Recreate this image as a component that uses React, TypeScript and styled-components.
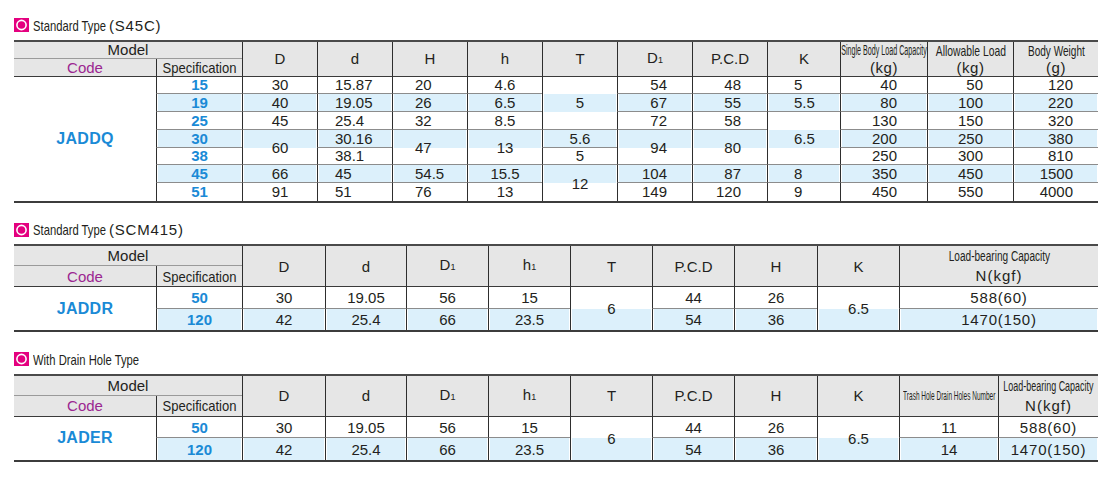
import React from 'react';
import styled, { createGlobalStyle } from 'styled-components';

const GlobalStyle = createGlobalStyle`
  html, body {
    margin: 0;
    padding: 0;
    background: #fff;
  }
  body {
    font-family: 'Liberation Sans', Arial, sans-serif;
    color: #231f20;
  }
`;

const Page = styled.div`
  width: 1084px;
  padding: 15px 12px 0 14px;
  display: flex;
  flex-direction: column;
  gap: 17px;
`;

const Section = styled.section`
  display: flex;
  flex-direction: column;
`;

const Title = styled.div`
  display: flex;
  align-items: center;
  height: 20px;
  margin-bottom: 4.5px;
  font-size: 15px;
  white-space: nowrap;
`;

const Marker = styled.svg`
  flex: none;
  margin-right: 4px;
`;

const TitleText = styled.span<{ $w: number }>`
  display: inline-block;
  width: ${(p) => p.$w}px;
  transform: scaleX(0.75);
  transform-origin: left center;
`;

const TitleGrade = styled.span`
  margin-left: 2px;
  letter-spacing: 0.8px;
`;

const Grid = styled.div<{ $cols: string; $rows: string }>`
  display: grid;
  grid-template-columns: ${(p) => p.$cols};
  grid-template-rows: ${(p) => p.$rows};
  border-top: 2px solid #4a4a4a;
  border-bottom: 2px solid #3c3c3c;
  font-size: 15px;
`;

const Band = styled.div<{ $row: number; $alt: boolean }>`
  grid-column: 2 / -1;
  grid-row: ${(p) => p.$row};
  background: ${(p) => (p.$alt ? '#dcf0fb' : '#fff')};
`;

const HeadCell = styled.div<{ $col: string; $row: string; $first?: boolean; $sep?: boolean; $lh?: number }>`
  grid-column: ${(p) => p.$col};
  grid-row: ${(p) => p.$row};
  display: flex;
  flex-direction: column;
  align-items: center;
  justify-content: center;
  background: #e6e6e6;
  border-left: ${(p) => (p.$first ? '0' : '1px solid #2e2e2e')};
  border-bottom: ${(p) => (p.$sep ? '1px solid #9a9a9a' : '1px solid #3a3a3a')};
  line-height: ${(p) => p.$lh ?? 17}px;
  white-space: nowrap;
  min-width: 0;
`;

const CodeLabel = styled.span`
  color: #9b2690;
`;

const Narrow = styled.span<{ $sx: number; $fs?: number }>`
  display: block;
  flex: none;
  font-size: ${(p) => p.$fs ?? 15}px;
  transform: scaleX(${(p) => p.$sx});
  transform-origin: center;
  white-space: nowrap;
`;

const Unit = styled.span<{ $ls?: number }>`
  display: block;
  letter-spacing: ${(p) => p.$ls ?? 0.5}px;
`;

const Sub = styled.span`
  font-size: 9px;
`;

type Align = 'c' | 'l' | 'r';

const Cell = styled.div<{ $col: string; $row: string; $line: boolean; $align?: Align; $pad?: number; $ls?: number }>`
  grid-column: ${(p) => p.$col};
  grid-row: ${(p) => p.$row};
  display: flex;
  align-items: center;
  justify-content: ${(p) => (p.$align === 'l' ? 'flex-start' : p.$align === 'r' ? 'flex-end' : 'center')};
  padding: 0 ${(p) => p.$pad ?? 0}px;
  border-left: 1px solid #2e2e2e;
  border-bottom: ${(p) => (p.$line ? '1px solid #8c8c8c' : '0')};
  box-shadow: inset 1px 0 #fff, inset -1px 0 #fff;
  letter-spacing: ${(p) => p.$ls ?? 0}px;
  white-space: nowrap;
  min-width: 0;
`;

const SpecNum = styled.span`
  color: #1a8ad6;
  font-weight: bold;
`;

const CodeCell = styled.div<{ $row: string }>`
  grid-column: 1;
  grid-row: ${(p) => p.$row};
  display: flex;
  align-items: center;
  justify-content: center;
  background: #fff;
  color: #1a8ad6;
  font-weight: bold;
  font-size: 16px;
  letter-spacing: 0.3px;
`;

type Val = string | [string, number];

interface Col {
  w: number;
  head: React.ReactNode;
  align?: Align;
  pad?: number;
  ls?: number;
  data: Val[];
}

interface TableSpec {
  title: string;
  titleW: number;
  grade?: string;
  code: string;
  specs: string[];
  headRows: [number, number];
  rowH: number;
  lh: number;
  cols: Col[];
}

const d1 = (
  <span>
    D<Sub>1</Sub>
  </span>
);
const h1 = (
  <span>
    h<Sub>1</Sub>
  </span>
);

const loadHead = (sx: number) => (
  <>
    <Narrow $sx={sx} $fs={14}>Load-bearing Capacity</Narrow>
    <Unit $ls={1}>N(kgf)</Unit>
  </>
);

const tables: TableSpec[] = [
  {
    title: 'Standard Type',
    titleW: 74,
    grade: '(S45C)',
    code: 'JADDQ',
    specs: ['15', '19', '25', '30', '38', '45', '51'],
    headRows: [17, 18],
    rowH: 17.75,
    lh: 17,
    cols: [
      { w: 75, head: 'D', data: ['30', '40', '45', ['60', 2], '66', '91'] },
      { w: 75, head: 'd', align: 'l', pad: 17, data: ['15.87', '19.05', '25.4', '30.16', '38.1', '45', '51'] },
      { w: 75, head: 'H', align: 'l', pad: 22, data: ['20', '26', '32', ['47', 2], '54.5', '76'] },
      { w: 75, head: 'h', data: ['4.6', '6.5', '8.5', ['13', 2], '15.5', '13'] },
      { w: 75, head: 'T', data: [['5', 3], '5.6', '5', ['12', 2]] },
      { w: 75, head: d1, align: 'r', pad: 25, data: ['54', '67', '72', ['94', 2], '104', '149'] },
      { w: 75, head: 'P.C.D', align: 'r', pad: 26, data: ['48', '55', '58', ['80', 2], '87', '120'] },
      { w: 73, head: 'K', align: 'l', pad: 26, data: ['5', '5.5', ['6.5', 3], '8', '9'] },
      {
        w: 87,
        head: (
          <>
            <Narrow $sx={0.51} $fs={14}>Single Body Load Capacity</Narrow>
            <Unit>(kg)</Unit>
          </>
        ),
        align: 'r',
        pad: 30,
        data: ['40', '80', '130', '200', '250', '350', '450'],
      },
      {
        w: 86,
        head: (
          <>
            <Narrow $sx={0.69}>Allowable Load</Narrow>
            <Unit>(kg)</Unit>
          </>
        ),
        align: 'r',
        pad: 30,
        data: ['50', '100', '150', '250', '300', '450', '550'],
      },
      {
        w: 85,
        head: (
          <>
            <Narrow $sx={0.67}>Body Weight</Narrow>
            <Unit>(g)</Unit>
          </>
        ),
        align: 'r',
        pad: 25,
        data: ['120', '220', '320', '380', '810', '1500', '4000'],
      },
    ],
  },
  {
    title: 'Standard Type',
    titleW: 74,
    grade: '(SCM415)',
    code: 'JADDR',
    specs: ['50', '120'],
    headRows: [20, 21],
    rowH: 21.5,
    lh: 19,
    cols: [
      { w: 83, head: 'D', data: ['30', '42'] },
      { w: 81, head: 'd', data: ['19.05', '25.4'] },
      { w: 82, head: d1, data: ['56', '66'] },
      { w: 82, head: h1, data: ['15', '23.5'] },
      { w: 82, head: 'T', data: [['6', 2]] },
      { w: 82, head: 'P.C.D', data: ['44', '54'] },
      { w: 83, head: 'H', data: ['26', '36'] },
      { w: 82, head: 'K', data: [['6.5', 2]] },
      { w: 199, head: loadHead(0.72), ls: 0.8, data: ['588(60)', '1470(150)'] },
    ],
  },
  {
    title: 'With Drain Hole Type',
    titleW: 104,
    code: 'JADER',
    specs: ['50', '120'],
    headRows: [20, 21],
    rowH: 21.5,
    lh: 19,
    cols: [
      { w: 83, head: 'D', data: ['30', '42'] },
      { w: 81, head: 'd', data: ['19.05', '25.4'] },
      { w: 82, head: d1, data: ['56', '66'] },
      { w: 82, head: h1, data: ['15', '23.5'] },
      { w: 82, head: 'T', data: [['6', 2]] },
      { w: 82, head: 'P.C.D', data: ['44', '54'] },
      { w: 83, head: 'H', data: ['26', '36'] },
      { w: 82, head: 'K', data: [['6.5', 2]] },
      {
        w: 99,
        head: <Narrow $sx={0.5} $fs={13}>Trash Hole Drain Holes Number</Narrow>,
        data: ['11', '14'],
      },
      { w: 100, head: loadHead(0.64), ls: 0.8, data: ['588(60)', '1470(150)'] },
    ],
  },
];

function SpecTable({ t }: { t: TableSpec }) {
  const n = t.specs.length;
  const colsTpl = ['142px', '86px', ...t.cols.map((c) => `${c.w}px`)].join(' ');
  const rowsTpl = `${t.headRows[0]}px ${t.headRows[1]}px repeat(${n}, ${t.rowH}px)`;

  const body: React.ReactNode[] = [];
  t.cols.forEach((c, ci) => {
    let r = 0;
    c.data.forEach((v, vi) => {
      const [txt, span] = typeof v === 'string' ? [v, 1] : v;
      body.push(
        <Cell
          key={`c${ci}-${vi}`}
          $col={String(ci + 3)}
          $row={`${r + 3} / span ${span}`}
          $line={r + span < n}
          $align={c.align}
          $pad={c.pad}
          $ls={c.ls}
        >
          {txt}
        </Cell>
      );
      r += span;
    });
  });

  return (
    <Grid $cols={colsTpl} $rows={rowsTpl}>
      {t.specs.map((_, i) => (
        <Band key={`b${i}`} $row={i + 3} $alt={i % 2 === 1} />
      ))}
      <HeadCell $col="1 / 3" $row="1" $first $sep>
        Model
      </HeadCell>
      <HeadCell $col="1" $row="2" $first>
        <CodeLabel>Code</CodeLabel>
      </HeadCell>
      <HeadCell $col="2" $row="2">
        <Narrow $sx={0.87}>Specification</Narrow>
      </HeadCell>
      {t.cols.map((c, i) => (
        <HeadCell key={`h${i}`} $col={String(i + 3)} $row="1 / 3" $lh={t.lh}>
          {c.head}
        </HeadCell>
      ))}
      <CodeCell $row={`3 / span ${n}`}>{t.code}</CodeCell>
      {t.specs.map((s, i) => (
        <Cell key={`s${i}`} $col="2" $row={String(i + 3)} $line={i < n - 1}>
          <SpecNum>{s}</SpecNum>
        </Cell>
      ))}
      {body}
    </Grid>
  );
}

function SectionMarker() {
  return (
    <Marker width="15" height="14" viewBox="0 0 15 14">
      <rect width="15" height="14" fill="#e4007f" />
      <circle cx="7.5" cy="7" r="4.6" fill="none" stroke="#fff" strokeWidth="1.6" />
    </Marker>
  );
}

export default function App() {
  return (
    <>
      <GlobalStyle />
      <Page>
        {tables.map((t) => (
          <Section key={t.code}>
            <Title>
              <SectionMarker />
              <TitleText $w={t.titleW}>{t.title}</TitleText>
              {t.grade && <TitleGrade>{t.grade}</TitleGrade>}
            </Title>
            <SpecTable t={t} />
          </Section>
        ))}
      </Page>
    </>
  );
}
